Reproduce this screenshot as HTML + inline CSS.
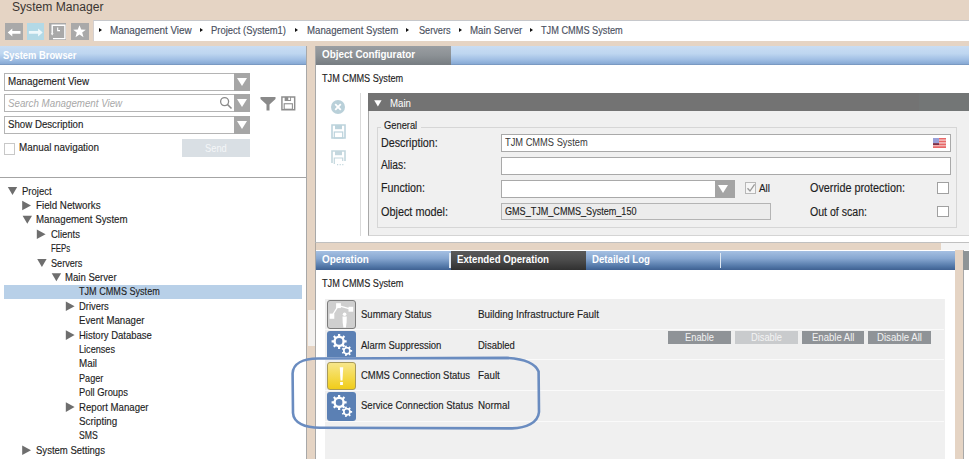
<!DOCTYPE html>
<html><head><meta charset="utf-8">
<style>
*{box-sizing:border-box;margin:0;padding:0}
html,body{width:969px;height:459px;overflow:hidden}
body{position:relative;background:#e5d4c4;font-family:"Liberation Sans",sans-serif}
.a{position:absolute}
.t{position:absolute;white-space:nowrap;line-height:14px;transform-origin:0 50%;font-family:"Liberation Sans",sans-serif}
.trd{position:absolute;width:0;height:0;border-left:4.7px solid transparent;border-right:4.7px solid transparent;border-top:8px solid #6e6e6e}
.trr{position:absolute;width:0;height:0;border-top:4.5px solid transparent;border-bottom:4.5px solid transparent;border-left:8.6px solid #6e6e6e}
.bca{position:absolute;width:0;height:0;border-top:2.5px solid transparent;border-bottom:2.5px solid transparent;border-left:3px solid #111;top:28.2px}
.nav{position:absolute;top:22.5px;width:17.5px;height:17.5px;background:#a9a9a9}
.hdrblue{background:linear-gradient(#c9ddf3 0%,#bed6f0 40%,#a2c0e5 70%,#8aacd6 92%,#7290b8 100%)}
.tabblue{background:linear-gradient(#a5c0e2 0%,#86a6d0 40%,#5378a8 80%,#3f6192 100%)}
.dd{position:absolute;left:3.5px;width:246.5px;height:17.5px;background:#fff;border:1px solid #b4b4b4}
.ddb{position:absolute;right:-1px;top:-1px;width:16px;height:17.5px;background:#a6a6a6}
.ddb:after{content:"";position:absolute;left:3px;top:5px;border-left:5px solid transparent;border-right:5px solid transparent;border-top:8px solid #fff}
.inp{position:absolute;left:501px;background:#fff;border:1px solid #a9a9a9}
.cb{position:absolute;width:11.5px;height:11.5px;background:#fff;border:1px solid #a0a0a0}
.row{position:absolute;left:325px;width:619px;height:29.5px;background:#efefef;border-bottom:1.5px solid #fafafa}
.ico{position:absolute;left:327px;width:29px;height:28.7px;border-radius:3px}
.btn{position:absolute;top:331px;height:12.7px;width:62.7px;background:#8f9397}
</style></head><body>

<!-- breadcrumb bar -->
<div class="a" style="left:92.6px;top:20.1px;width:877px;height:21.2px;background:#fff;border-top:1px solid #c6c8cc;border-left:1px solid #d4d0d0"></div>
<div class="bca" style="left:98.5px"></div>
<div class="bca" style="left:200px"></div>
<div class="bca" style="left:294.6px"></div>
<div class="bca" style="left:406.4px"></div>
<div class="bca" style="left:458.5px"></div>
<div class="bca" style="left:530px"></div>

<!-- nav buttons -->
<div class="nav" style="left:5.1px">
  <svg width="18" height="18" viewBox="0 0 18 18" style="position:absolute;left:0;top:0"><path d="M2.7 9.4 L7.3 5.4 L7.3 8 L15.5 8 L15.5 10.8 L7.3 10.8 L7.3 13.6 Z" fill="#fff"/></svg>
</div>
<div class="nav" style="left:26.7px;background:#b3d9e6">
  <svg width="18" height="18" viewBox="0 0 18 18" style="position:absolute;left:0;top:0"><path d="M15.7 9.4 L11.1 5.4 L11.1 8 L1.9 8 L1.9 10.8 L11.1 10.8 L11.1 13.6 Z" fill="#eef8fb"/></svg>
</div>
<div class="nav" style="left:48.5px">
  <svg width="18" height="18" viewBox="0 0 18 18" style="position:absolute;left:0;top:0"><path d="M3.2 10.6 L3.2 2.2 L15.9 2.2 L15.9 15.6 L4 15.6" fill="none" stroke="#fff" stroke-width="1.4"/><path d="M1.8 10.2 L4.6 10.2 L3.2 12.4 Z" fill="#fff"/><path d="M8.7 4.5 L8.7 7.6 L11 7.6" fill="none" stroke="#fff" stroke-width="1.1"/></svg>
</div>
<div class="nav" style="left:71px">
  <svg width="18" height="18" viewBox="0 0 18 18" style="position:absolute;left:0;top:0"><path d="M8.5 2.2 L10.2 6.6 L14.8 6.8 L11.2 9.6 L12.5 14.2 L8.5 11.6 L4.5 14.2 L5.8 9.6 L2.2 6.8 L6.8 6.6 Z" fill="#fff"/></svg>
</div>

<!-- LEFT PANEL -->
<div class="a" style="left:0;top:46px;width:307px;height:413px;background:#fff;border-right:1px solid #a8a8a8"></div>
<div class="a hdrblue" style="left:0;top:46px;width:306px;height:19px"></div>
<div class="dd" style="top:73px"><div class="ddb"></div></div>
<div class="dd" style="top:94.3px"><div class="ddb"></div>
  <svg width="14" height="14" viewBox="0 0 14 14" style="position:absolute;left:214px;top:1px"><circle cx="5.6" cy="5.6" r="4" fill="none" stroke="#8a8a8a" stroke-width="1.3"/><path d="M8.5 8.5 L12.5 12.5" stroke="#8a8a8a" stroke-width="1.6"/></svg>
</div>
<div class="dd" style="top:116px"><div class="ddb"></div></div>
<div class="cb" style="left:3.5px;top:143px;border-color:#c8c8c8"></div>
<div class="a" style="left:182px;top:139.2px;width:67.5px;height:17.8px;background:#d9dfe4"></div>
<!-- filter & save -->
<svg class="a" width="16" height="16" viewBox="0 0 16 16" style="left:259.5px;top:96px"><path d="M0.5 1 L15.5 1 L15.5 3 L9.5 8.5 L9.5 14.5 L6.5 14.5 L6.5 8.5 L0.5 3 Z" fill="#8a8a8a"/></svg>
<svg class="a" width="14.6" height="14.6" viewBox="0 0 16 16" style="left:281.3px;top:96.3px"><path d="M1 1 L15 1 L15 15 L1 15 Z" fill="none" stroke="#8e8e8e" stroke-width="1.6"/><rect x="4" y="1" width="7" height="4.5" fill="#8e8e8e"/><rect x="8" y="1.8" width="2" height="2.6" fill="#fff"/><rect x="3.5" y="8.5" width="9" height="6" fill="none" stroke="#8e8e8e" stroke-width="1.2"/></svg>
<div class="a" style="left:0;top:177.3px;width:306px;height:1px;background:#a4a4a4"></div>
<!-- selected tree row -->
<div class="a" style="left:3.5px;top:284.5px;width:298px;height:14px;background:#b8d0e8"></div>
<svg class="a" width="969" height="459" style="left:0;top:0" fill="#6e6e6e"><path d="M7.8 186.9 L17.2 186.9 L12.5 194.9 Z"/><path d="M22.2 200.7 L31.0 205.5 L22.2 210.3 Z"/><path d="M22.6 215.7 L32.0 215.7 L27.3 223.7 Z"/><path d="M36.8 229.5 L45.6 234.3 L36.8 239.1 Z"/><path d="M37.2 258.9 L46.6 258.9 L41.9 266.9 Z"/><path d="M51.7 273.3 L61.1 273.3 L56.4 281.3 Z"/><path d="M65.8 301.5 L74.6 306.3 L65.8 311.1 Z"/><path d="M65.8 330.3 L74.6 335.1 L65.8 339.9 Z"/><path d="M65.8 402.3 L74.6 407.1 L65.8 411.9 Z"/><path d="M22.2 445.5 L31.0 450.3 L22.2 455.1 Z"/></svg>
<!-- left scrollbar strip -->
<div class="a" style="left:315px;top:46px;width:1px;height:413px;background:#b0a8a0"></div>
<div class="a" style="left:308px;top:310px;width:6.5px;height:36px;background:#f2f0ee"></div>

<!-- RIGHT TOP PANEL: object configurator -->
<div class="a" style="left:315px;top:46px;width:654px;height:196.5px;background:#fff;border-left:1px solid #a8a8a8;border-bottom:1px solid #c0c0c0"></div>
<div class="a hdrblue" style="left:316px;top:46px;width:653px;height:19px"></div>
<div class="a" style="left:316px;top:46px;width:134.5px;height:19px;background:linear-gradient(#9a9ea2 0%,#8c9195 50%,#767c81 100%)"></div>
<!-- side icons -->
<svg class="a" width="16" height="16" viewBox="0 0 16 16" style="left:330px;top:98.9px"><circle cx="8" cy="8" r="7" fill="#b9d0d9"/><path d="M5.2 5.2 L10.8 10.8 M10.8 5.2 L5.2 10.8" stroke="#fff" stroke-width="1.8"/></svg>
<svg class="a" width="15" height="15" viewBox="0 0 15 15" style="left:331px;top:124px"><path d="M1 1 L14 1 L14 14 L1 14 Z" fill="none" stroke="#bcd3dc" stroke-width="1.6"/><rect x="4" y="1" width="7" height="4.2" fill="#bcd3dc"/><rect x="3.3" y="8" width="8.4" height="6" fill="none" stroke="#bcd3dc" stroke-width="1.2"/></svg>
<svg class="a" width="15" height="16" viewBox="0 0 15 16" style="left:331px;top:149.5px"><path d="M1 13 L1 1 L14 1 L14 11" fill="none" stroke="#c4d7de" stroke-width="1.6"/><rect x="4" y="1" width="7" height="4.2" fill="#c4d7de"/><path d="M3.3 14 L3.3 8 L11.7 8 L11.7 11" fill="none" stroke="#c4d7de" stroke-width="1.2"/><path d="M6 14.6 h1.2 M8.6 14.6 h1.2 M11.2 14.6 h1.2" stroke="#c4d7de" stroke-width="1.2"/></svg>
<div class="a" style="left:360px;top:93px;width:1px;height:143px;background:#dadada"></div>
<!-- main section -->
<div class="a" style="left:368px;top:93.7px;width:601px;height:142.5px;background:#f0f0f0;border-left:1px solid #a8a8a8;border-bottom:1px solid #d4d4d4"></div>
<div class="a" style="left:368px;top:93.4px;width:601px;height:17.8px;background:#737373"></div>
<div class="a" style="left:919px;top:93.4px;width:50px;height:17.8px;background:#737676"></div>
<svg class="a" width="10" height="10" style="left:373.5px;top:99.5px"><path d="M0.2 0.2 L7.6 0.2 L3.9 6.6 Z" fill="#fff"/></svg>
<!-- general group -->
<div class="a" style="left:377.4px;top:127px;width:580px;height:100.5px;border:1px solid #d6d6d6"></div>
<div class="a" style="left:381px;top:120px;width:40px;height:10px;background:#f0f0f0"></div>
<div class="inp" style="top:134.2px;width:450px;height:17.9px"></div>
<svg class="a" width="13" height="10" viewBox="0 0 13 10" style="left:933px;top:137.8px"><rect width="13" height="10" fill="#e86868"/><rect y="1.4" width="13" height="1.4" fill="#f4c8c8"/><rect y="4.2" width="13" height="1.4" fill="#f4c8c8"/><rect y="7" width="13" height="1.4" fill="#f0b0b0"/><rect width="6" height="5.4" fill="#9aa0d8"/><rect y="5.2" width="6" height="1.8" fill="#7a3048"/></svg>
<div class="inp" style="top:157.2px;width:450px;height:17.4px"></div>
<div class="inp" style="top:180.4px;width:234px;height:17.8px"><div class="ddb" style="height:17.8px;width:20px;background:#a4a4a4"></div></div>
<div class="cb" style="left:744.5px;top:181.5px;width:11.5px;height:12px;background:#f6f6f6;border-color:#b8b8b8"></div>
<svg class="a" width="12" height="12" viewBox="0 0 12 12" style="left:744.5px;top:181.5px"><path d="M2.5 6.2 L5 9 L9.6 2.4" fill="none" stroke="#9a9a9a" stroke-width="1.3"/></svg>
<div class="cb" style="left:937.2px;top:182.3px"></div>
<div class="cb" style="left:937.2px;top:205.6px"></div>
<div class="inp" style="top:203.3px;width:269.5px;height:17.2px;background:#ececec;border-color:#b4b4b4"></div>

<!-- RIGHT BOTTOM PANEL -->
<div class="a" style="left:941px;top:242.5px;width:28px;height:7.5px;background:#f4f4f4"></div>
<div class="a" style="left:315px;top:250px;width:640px;height:209px;background:#fff;border-left:1px solid #a8a8a8"></div>
<div class="a tabblue" style="left:316px;top:251px;width:639px;height:18.6px"></div>
<div class="a" style="left:451.2px;top:251px;width:134.7px;height:18.6px;background:linear-gradient(#5a5a5a 0%,#4a4a4a 50%,#303030 100%)"></div>
<div class="a" style="left:449.2px;top:253px;width:1.5px;height:15px;background:#dfe8f2"></div>
<div class="a" style="left:719.5px;top:253px;width:1.5px;height:15px;background:#dfe8f2"></div>
<div class="a" style="left:963px;top:250px;width:6px;height:209px;background:#fff;border-left:1px solid #a8a8a8"></div>
<div class="a" style="left:963px;top:251px;width:6px;height:18.6px;background:#8e9496"></div>
<!-- status rows -->
<div class="a" style="left:325px;top:298.6px;width:619.6px;height:160.4px;background:#f0f0f0"></div>
<div class="row" style="top:298.6px;height:31px"></div>
<div class="row" style="top:329.6px;height:30.8px"></div>
<div class="row" style="top:360.4px;height:30.6px"></div>
<div class="row" style="top:391px;height:30.7px"></div>
<div class="ico" style="top:300.1px;background:#cfcfcf;border:1.3px solid #7c7c7c">
  <svg width="29" height="29" viewBox="0 0 29 29" style="position:absolute;left:-1.3px;top:-1.3px"><path d="M11.4 5.6 L4.9 16 M11.4 5.6 L23.8 9.2" stroke="#fff" stroke-width="1.3" fill="none"/><rect x="9.1" y="3.2" width="4.8" height="4.9" fill="#fff"/><rect x="21.5" y="6.8" width="4.7" height="4.9" fill="#fff"/><rect x="2.6" y="13.6" width="4.7" height="5.2" fill="#fff"/><circle cx="17.6" cy="14.2" r="1.8" fill="#fff"/><path d="M15.5 16.5 L19.8 16.5 L19.6 22.6 L18.9 27.6 L16.4 27.6 L15.7 22.6 Z" fill="#fff"/></svg>
</div>
<div class="ico" style="top:331.2px;background:#5b80b4;height:26px;border-radius:3px 3px 0 0">
  <svg width="29" height="29" viewBox="0 0 29 29" style="position:absolute;left:0;top:0"><path fill-rule="evenodd" fill="#fff" d="M17.49 8.55 L17.69 9.29 L19.62 9.28 L19.62 11.52 L17.69 11.51 L17.22 12.91 L16.84 13.57 L18.20 14.93 L16.63 16.50 L15.27 15.14 L13.95 15.79 L13.21 15.99 L13.22 17.92 L10.98 17.92 L10.99 15.99 L9.59 15.52 L8.93 15.14 L7.57 16.50 L6.00 14.93 L7.36 13.57 L6.71 12.25 L6.51 11.51 L4.58 11.52 L4.58 9.28 L6.51 9.29 L6.98 7.89 L7.36 7.23 L6.00 5.87 L7.57 4.30 L8.93 5.66 L10.25 5.01 L10.99 4.81 L10.98 2.88 L13.22 2.88 L13.21 4.81 L14.61 5.28 L15.27 5.66 L16.63 4.30 L18.20 5.87 L16.84 7.23 Z M15.40 10.40 A3.3 3.3 0 1 0 8.80 10.40 A3.3 3.3 0 1 0 15.40 10.40 Z M23.53 18.36 L23.70 18.93 L25.13 18.91 L25.13 20.69 L23.70 20.67 L23.28 21.74 L22.95 22.23 L23.85 23.33 L22.46 24.44 L21.59 23.31 L20.49 23.65 L19.90 23.70 L19.60 25.09 L17.87 24.70 L18.21 23.31 L17.26 22.67 L16.85 22.23 L15.58 22.87 L14.81 21.27 L16.10 20.67 L16.01 19.52 L16.10 18.93 L14.81 18.33 L15.58 16.73 L16.85 17.37 L17.69 16.58 L18.21 16.29 L17.87 14.90 L19.60 14.51 L19.90 15.90 L21.04 16.07 L21.59 16.29 L22.46 15.16 L23.85 16.27 L22.95 17.37 Z M22.10 19.80 A2.2 2.2 0 1 0 17.70 19.80 A2.2 2.2 0 1 0 22.10 19.80 Z"/></svg>
</div>
<div class="ico" style="top:361.5px;background:linear-gradient(#f7e68a 0%,#f4d94a 55%,#f0cc1a 100%);border:1px solid #a89a58">
  <svg width="29" height="29" viewBox="0 0 29 29" style="position:absolute;left:-1px;top:-1px"><path d="M12.8 5.2 L16.2 5.2 L15.5 18.6 L13.5 18.6 Z" fill="#fff"/><rect x="13.1" y="20" width="2.8" height="3" fill="#fff"/></svg>
</div>
<div class="ico" style="top:392.1px;background:#5b80b4">
  <svg width="29" height="29" viewBox="0 0 29 29" style="position:absolute;left:0;top:0"><path fill-rule="evenodd" fill="#fff" d="M17.49 8.55 L17.69 9.29 L19.62 9.28 L19.62 11.52 L17.69 11.51 L17.22 12.91 L16.84 13.57 L18.20 14.93 L16.63 16.50 L15.27 15.14 L13.95 15.79 L13.21 15.99 L13.22 17.92 L10.98 17.92 L10.99 15.99 L9.59 15.52 L8.93 15.14 L7.57 16.50 L6.00 14.93 L7.36 13.57 L6.71 12.25 L6.51 11.51 L4.58 11.52 L4.58 9.28 L6.51 9.29 L6.98 7.89 L7.36 7.23 L6.00 5.87 L7.57 4.30 L8.93 5.66 L10.25 5.01 L10.99 4.81 L10.98 2.88 L13.22 2.88 L13.21 4.81 L14.61 5.28 L15.27 5.66 L16.63 4.30 L18.20 5.87 L16.84 7.23 Z M15.40 10.40 A3.3 3.3 0 1 0 8.80 10.40 A3.3 3.3 0 1 0 15.40 10.40 Z M23.53 18.36 L23.70 18.93 L25.13 18.91 L25.13 20.69 L23.70 20.67 L23.28 21.74 L22.95 22.23 L23.85 23.33 L22.46 24.44 L21.59 23.31 L20.49 23.65 L19.90 23.70 L19.60 25.09 L17.87 24.70 L18.21 23.31 L17.26 22.67 L16.85 22.23 L15.58 22.87 L14.81 21.27 L16.10 20.67 L16.01 19.52 L16.10 18.93 L14.81 18.33 L15.58 16.73 L16.85 17.37 L17.69 16.58 L18.21 16.29 L17.87 14.90 L19.60 14.51 L19.90 15.90 L21.04 16.07 L21.59 16.29 L22.46 15.16 L23.85 16.27 L22.95 17.37 Z M22.10 19.80 A2.2 2.2 0 1 0 17.70 19.80 A2.2 2.2 0 1 0 22.10 19.80 Z"/></svg>
</div>
<div class="btn" style="left:668.1px"></div>
<div class="btn" style="left:735.1px;background:#c9cbcd"></div>
<div class="btn" style="left:801.6px"></div>
<div class="btn" style="left:868px"></div>

<div class="t" style="left:12.0px;top:-0.4px;font-size:12.5px;color:#3a3432;transform:scaleX(0.968);">System Manager</div>
<div class="t" style="left:109.8px;top:22.9px;font-size:10.5px;color:#4a5060;transform:scaleX(0.941);-webkit-text-stroke:0.15px #4a5060;">Management View</div>
<div class="t" style="left:211.3px;top:22.9px;font-size:10.5px;color:#4a5060;transform:scaleX(0.899);-webkit-text-stroke:0.15px #4a5060;">Project (System1)</div>
<div class="t" style="left:307.0px;top:22.9px;font-size:10.5px;color:#4a5060;transform:scaleX(0.919);-webkit-text-stroke:0.15px #4a5060;">Management System</div>
<div class="t" style="left:418.5px;top:22.9px;font-size:10.5px;color:#4a5060;transform:scaleX(0.873);-webkit-text-stroke:0.15px #4a5060;">Servers</div>
<div class="t" style="left:469.5px;top:22.9px;font-size:10.5px;color:#4a5060;transform:scaleX(0.924);-webkit-text-stroke:0.15px #4a5060;">Main Server</div>
<div class="t" style="left:541.0px;top:22.9px;font-size:10.5px;color:#4a5060;transform:scaleX(0.876);-webkit-text-stroke:0.15px #4a5060;">TJM CMMS System</div>
<div class="t" style="left:2.6px;top:48.4px;font-size:10.5px;color:#ffffff;transform:scaleX(0.893);font-weight:700;">System Browser</div>
<div class="t" style="left:7.7px;top:74.0px;font-size:11px;color:#1e1e1e;transform:scaleX(0.891);-webkit-text-stroke:0.15px #1e1e1e;">Management View</div>
<div class="t" style="left:8.4px;top:96.0px;font-size:11px;color:#a8a8a8;transform:scaleX(0.886);font-style:italic;">Search Management View</div>
<div class="t" style="left:7.7px;top:116.9px;font-size:11px;color:#1e1e1e;transform:scaleX(0.880);-webkit-text-stroke:0.15px #1e1e1e;">Show Description</div>
<div class="t" style="left:19.2px;top:140.2px;font-size:11px;color:#1e1e1e;transform:scaleX(0.896);-webkit-text-stroke:0.15px #1e1e1e;">Manual navigation</div>
<div class="t" style="left:205.4px;top:140.7px;font-size:11px;color:#f4f6f8;transform:scaleX(0.848);">Send</div>
<div class="t" style="left:21.6px;top:183.5px;font-size:11px;color:#1e1e1e;transform:scaleX(0.864);-webkit-text-stroke:0.15px #1e1e1e;">Project</div>
<div class="t" style="left:35.9px;top:197.9px;font-size:11px;color:#1e1e1e;transform:scaleX(0.887);-webkit-text-stroke:0.15px #1e1e1e;">Field Networks</div>
<div class="t" style="left:35.9px;top:212.3px;font-size:11px;color:#1e1e1e;transform:scaleX(0.881);-webkit-text-stroke:0.15px #1e1e1e;">Management System</div>
<div class="t" style="left:50.5px;top:226.7px;font-size:11px;color:#1e1e1e;transform:scaleX(0.859);-webkit-text-stroke:0.15px #1e1e1e;">Clients</div>
<div class="t" style="left:50.5px;top:241.1px;font-size:11px;color:#1e1e1e;transform:scaleX(0.714);-webkit-text-stroke:0.15px #1e1e1e;">FEPs</div>
<div class="t" style="left:50.5px;top:255.5px;font-size:11px;color:#1e1e1e;transform:scaleX(0.828);-webkit-text-stroke:0.15px #1e1e1e;">Servers</div>
<div class="t" style="left:64.8px;top:269.9px;font-size:11px;color:#1e1e1e;transform:scaleX(0.870);-webkit-text-stroke:0.15px #1e1e1e;">Main Server</div>
<div class="t" style="left:79.3px;top:284.3px;font-size:11px;color:#1e1e1e;transform:scaleX(0.826);-webkit-text-stroke:0.15px #1e1e1e;">TJM CMMS System</div>
<div class="t" style="left:79.3px;top:298.7px;font-size:11px;color:#1e1e1e;transform:scaleX(0.855);-webkit-text-stroke:0.15px #1e1e1e;">Drivers</div>
<div class="t" style="left:79.3px;top:313.1px;font-size:11px;color:#1e1e1e;transform:scaleX(0.878);-webkit-text-stroke:0.15px #1e1e1e;">Event Manager</div>
<div class="t" style="left:79.3px;top:327.5px;font-size:11px;color:#1e1e1e;transform:scaleX(0.864);-webkit-text-stroke:0.15px #1e1e1e;">History Database</div>
<div class="t" style="left:79.3px;top:341.9px;font-size:11px;color:#1e1e1e;transform:scaleX(0.829);-webkit-text-stroke:0.15px #1e1e1e;">Licenses</div>
<div class="t" style="left:79.3px;top:356.3px;font-size:11px;color:#1e1e1e;transform:scaleX(0.892);-webkit-text-stroke:0.15px #1e1e1e;">Mail</div>
<div class="t" style="left:79.3px;top:370.7px;font-size:11px;color:#1e1e1e;transform:scaleX(0.828);-webkit-text-stroke:0.15px #1e1e1e;">Pager</div>
<div class="t" style="left:79.3px;top:385.1px;font-size:11px;color:#1e1e1e;transform:scaleX(0.852);-webkit-text-stroke:0.15px #1e1e1e;">Poll Groups</div>
<div class="t" style="left:79.3px;top:399.5px;font-size:11px;color:#1e1e1e;transform:scaleX(0.875);-webkit-text-stroke:0.15px #1e1e1e;">Report Manager</div>
<div class="t" style="left:79.3px;top:413.9px;font-size:11px;color:#1e1e1e;transform:scaleX(0.895);-webkit-text-stroke:0.15px #1e1e1e;">Scripting</div>
<div class="t" style="left:79.3px;top:428.3px;font-size:11px;color:#1e1e1e;transform:scaleX(0.788);-webkit-text-stroke:0.15px #1e1e1e;">SMS</div>
<div class="t" style="left:35.9px;top:442.7px;font-size:11px;color:#1e1e1e;transform:scaleX(0.867);-webkit-text-stroke:0.15px #1e1e1e;">System Settings</div>
<div class="t" style="left:321.9px;top:47.2px;font-size:10.5px;color:#ffffff;transform:scaleX(0.938);font-weight:700;">Object Configurator</div>
<div class="t" style="left:321.6px;top:71.3px;font-size:11px;color:#1e1e1e;transform:scaleX(0.830);-webkit-text-stroke:0.15px #1e1e1e;">TJM CMMS System</div>
<div class="t" style="left:390.0px;top:95.5px;font-size:11px;color:#ffffff;transform:scaleX(0.881);">Main</div>
<div class="t" style="left:384.0px;top:117.7px;font-size:11px;color:#1e1e1e;transform:scaleX(0.848);-webkit-text-stroke:0.15px #1e1e1e;">General</div>
<div class="t" style="left:381.2px;top:136.0px;font-size:12px;color:#1e1e1e;transform:scaleX(0.896);-webkit-text-stroke:0.15px #1e1e1e;">Description:</div>
<div class="t" style="left:381.2px;top:158.3px;font-size:12px;color:#1e1e1e;transform:scaleX(0.852);-webkit-text-stroke:0.15px #1e1e1e;">Alias:</div>
<div class="t" style="left:381.2px;top:181.0px;font-size:12px;color:#1e1e1e;transform:scaleX(0.891);-webkit-text-stroke:0.15px #1e1e1e;">Function:</div>
<div class="t" style="left:381.2px;top:204.5px;font-size:12px;color:#1e1e1e;transform:scaleX(0.905);-webkit-text-stroke:0.15px #1e1e1e;">Object model:</div>
<div class="t" style="left:504.8px;top:135.2px;font-size:11px;color:#383838;transform:scaleX(0.845);">TJM CMMS System</div>
<div class="t" style="left:504.8px;top:203.6px;font-size:11px;color:#1e1e1e;transform:scaleX(0.824);-webkit-text-stroke:0.15px #1e1e1e;">GMS_TJM_CMMS_System_150</div>
<div class="t" style="left:759.4px;top:180.6px;font-size:11px;color:#1e1e1e;transform:scaleX(0.899);-webkit-text-stroke:0.15px #1e1e1e;">All</div>
<div class="t" style="left:809.8px;top:181.1px;font-size:12px;color:#1e1e1e;transform:scaleX(0.901);-webkit-text-stroke:0.15px #1e1e1e;">Override protection:</div>
<div class="t" style="left:809.8px;top:204.5px;font-size:12px;color:#1e1e1e;transform:scaleX(0.881);-webkit-text-stroke:0.15px #1e1e1e;">Out of scan:</div>
<div class="t" style="left:322.0px;top:252.4px;font-size:10.5px;color:#ffffff;transform:scaleX(0.942);font-weight:700;">Operation</div>
<div class="t" style="left:457.4px;top:252.4px;font-size:10.5px;color:#ffffff;transform:scaleX(0.922);font-weight:700;">Extended Operation</div>
<div class="t" style="left:592.0px;top:252.4px;font-size:10.5px;color:#ffffff;transform:scaleX(0.920);font-weight:700;">Detailed Log</div>
<div class="t" style="left:321.6px;top:276.3px;font-size:11px;color:#1e1e1e;transform:scaleX(0.832);-webkit-text-stroke:0.15px #1e1e1e;">TJM CMMS System</div>
<div class="t" style="left:360.6px;top:307.0px;font-size:11px;color:#1e1e1e;transform:scaleX(0.867);-webkit-text-stroke:0.15px #1e1e1e;">Summary Status</div>
<div class="t" style="left:477.9px;top:306.8px;font-size:11px;color:#1e1e1e;transform:scaleX(0.900);-webkit-text-stroke:0.15px #1e1e1e;">Building Infrastructure Fault</div>
<div class="t" style="left:360.6px;top:337.5px;font-size:11px;color:#1e1e1e;transform:scaleX(0.865);-webkit-text-stroke:0.15px #1e1e1e;">Alarm Suppression</div>
<div class="t" style="left:477.9px;top:337.5px;font-size:11px;color:#1e1e1e;transform:scaleX(0.860);-webkit-text-stroke:0.15px #1e1e1e;">Disabled</div>
<div class="t" style="left:360.7px;top:368.3px;font-size:11px;color:#1e1e1e;transform:scaleX(0.861);-webkit-text-stroke:0.15px #1e1e1e;">CMMS Connection Status</div>
<div class="t" style="left:477.5px;top:368.3px;font-size:11px;color:#1e1e1e;transform:scaleX(0.891);-webkit-text-stroke:0.15px #1e1e1e;">Fault</div>
<div class="t" style="left:360.7px;top:398.4px;font-size:11px;color:#1e1e1e;transform:scaleX(0.866);-webkit-text-stroke:0.15px #1e1e1e;">Service Connection Status</div>
<div class="t" style="left:477.5px;top:398.4px;font-size:11px;color:#1e1e1e;transform:scaleX(0.891);-webkit-text-stroke:0.15px #1e1e1e;">Normal</div>
<div class="t" style="left:685.4px;top:330.4px;font-size:11px;color:#f2f2f2;transform:scaleX(0.846);">Enable</div>
<div class="t" style="left:751.0px;top:330.4px;font-size:11px;color:#f4f4f4;transform:scaleX(0.845);">Disable</div>
<div class="t" style="left:811.7px;top:330.4px;font-size:11px;color:#f2f2f2;transform:scaleX(0.868);">Enable All</div>
<div class="t" style="left:877.3px;top:330.4px;font-size:11px;color:#f2f2f2;transform:scaleX(0.876);">Disable All</div>

<!-- annotation ellipse -->
<svg class="a" width="969" height="459" viewBox="0 0 969 459" style="left:0;top:0">
<path d="M318 358.5 L507 357.9 C522 358.8 535 362.5 538.6 371.5 L539 412 C538 423 526 428 512 428.4 L320 427.8 C305 427.6 293.5 423 293 413 L292.6 373.5 C293 363.5 303 358.7 318 358.5 Z" fill="none" stroke="#6a8cc0" stroke-width="2.6"/>
</svg>
</body></html>
